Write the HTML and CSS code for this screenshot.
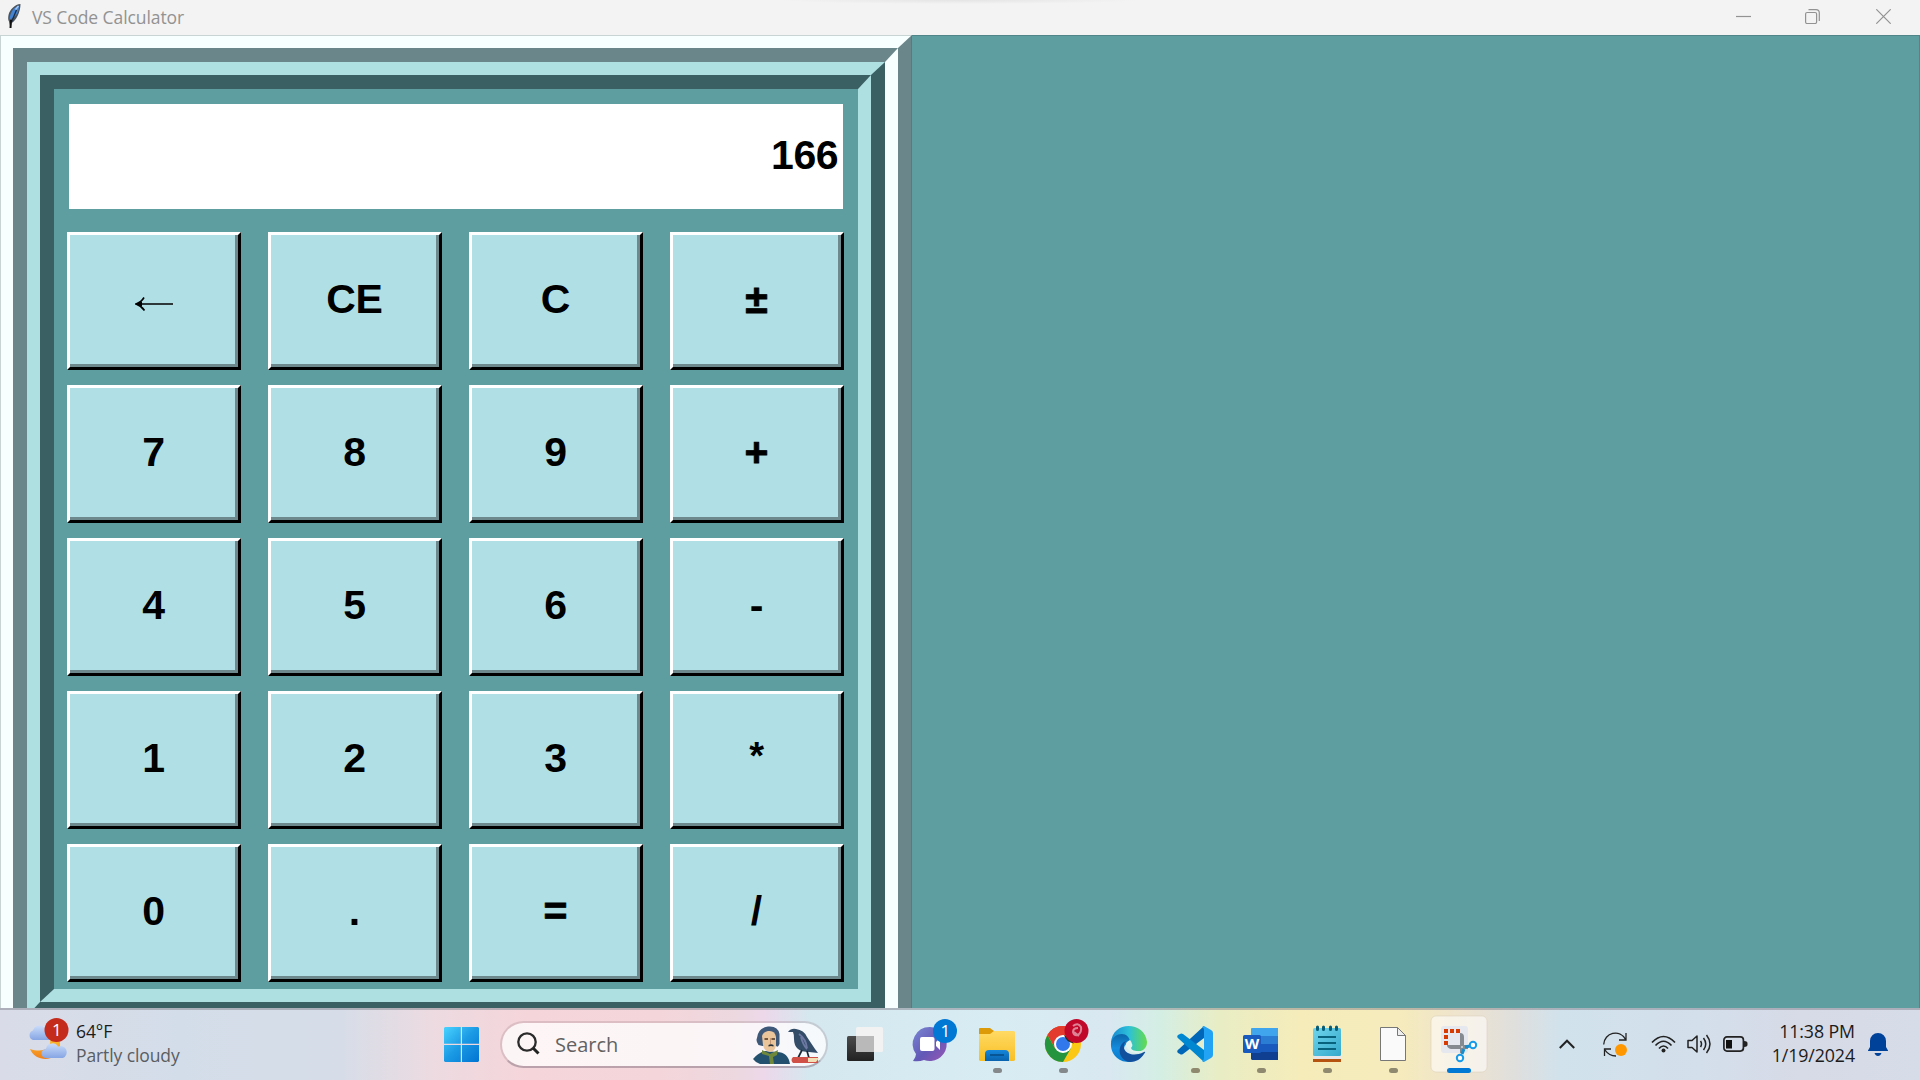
FILE: index.html
```html
<!DOCTYPE html>
<html lang="en">
<head>
<meta charset="utf-8">
<title>VS Code Calculator</title>
<link rel="stylesheet" href="styles.css">
</head>
<body>
<header class="titlebar">
  <svg class="feather" width="16" height="26" viewBox="0 0 16 26"><path d="M14.500 1C9 1 3.500 7 2.500 12c-.5 3-.5 5 .5 6.500L4.500 25l1-5C10 18 14.500 9 14.500 1z" fill="#4b535c"/><path d="M13 2.500C8 4 4 9 3.500 16.500 9 15 13.500 9 13 2.500z" fill="#4584d2"/><path d="M10.500 7 5.500 19" stroke="#1c2c44" stroke-width="1.300"/><path d="m5 17-.5 8" stroke="#111" stroke-width="2"/><path d="m12.500 3-3 3.500" stroke="#a8c8ee" stroke-width="1.500"/></svg>
  <span class="title">VS Code Calculator</span>
  <div class="controls">
    <svg width="15" height="15" viewBox="0 0 15 15"><path d="M0 7.500h15"/></svg>
    <svg width="15" height="15" viewBox="0 0 15 15"><rect x=".6" y="3.500" width="11" height="11" rx="1.500"/><path d="M3.500.700H11Q14.300.700 14.300 4v8"/></svg>
    <svg class="close" width="15" height="15" viewBox="0 0 15 15"><path d="m.3.300 14.400 14.400M14.700.300.300 14.700"/></svg>
  </div>
</header>
<main class="window">
  <div class="ring ring-1"><div class="ring ring-2"><div class="ring ring-3"><div class="ring ring-4">
    <output class="display">166</output>
    <div class="keys">
      <button class="key"><svg width="38" height="14" viewBox="0 0 38 14"><path d="M2 7h36M9 .500Q6.500 5 1 7q5.500 2 8.500 6.500" fill="none" stroke="#000" stroke-width="1.600"/><path d="M0 7 7 4.500v5z"/></svg></button><button class="key">CE</button><button class="key">C</button><button class="key op">±</button>
      <button class="key">7</button><button class="key">8</button><button class="key">9</button><button class="key op">+</button>
      <button class="key">4</button><button class="key">5</button><button class="key">6</button><button class="key">-</button>
      <button class="key">1</button><button class="key">2</button><button class="key">3</button><button class="key star">*</button>
      <button class="key">0</button><button class="key">.</button><button class="key op">=</button><button class="key">/</button>
    </div>
  </div></div></div></div>
</main>
<footer class="taskbar">
  <div class="weather">
    <svg width="44" height="46" viewBox="0 0 44 46">
      <defs><linearGradient id="cloud" x2="0" y2="1"><stop stop-color="#c9dcfa"/><stop offset="1" stop-color="#86a5e4"/></linearGradient><linearGradient id="moon" x2="0" y2="1"><stop stop-color="#fdbd2c"/><stop offset="1" stop-color="#f0801c"/></linearGradient></defs>
      <path d="M6 22a5 5 0 0 1 0-9.500 6.500 6.500 0 0 1 12-1.500q6 1 5 11z" fill="url(#cloud)"/>
      <path d="M33 21v9c-4 15-25 14-30 1 12 4 22 0 20-10z" fill="url(#moon)"/>
      <path d="M19 40a4.500 4.500 0 0 1 0-9 6.500 6.500 0 0 1 12-2.500 6 6 0 0 1 5 11.500z" fill="url(#cloud)"/>
      <circle cx="29.500" cy="12" r="12" fill="#c42b1c"/><text x="29.800" y="18" class="badge">1</text>
    </svg>
    <div class="forecast"><span class="temp">64°F</span><span class="sky">Partly cloudy</span></div>
  </div>
  <svg class="start" width="35" height="35" viewBox="0 0 35 35"><defs><linearGradient id="win" x2="1" y2="1"><stop stop-color="#4ad3ff"/><stop offset=".5" stop-color="#1a99e4"/><stop offset="1" stop-color="#0074d2"/></linearGradient></defs><path d="M1 0h15.800v16.800H0V1zM18 0h16l1 1v15.800H18zM0 18h16.800v17H1l-1-1zM18 18h17v16l-1 1H18z" fill="url(#win)"/></svg>
  <div class="search">
    <svg width="23" height="24" viewBox="0 0 23 24"><circle cx="10" cy="10" r="8.700" fill="none" stroke="#2b2b2b" stroke-width="2.300"/><path d="m16 16 5.500 5.500" stroke="#222" stroke-width="3"/></svg>
    <span class="placeholder">Search</span>
    <svg class="art" width="68" height="38" viewBox="0 0 68 38">
      <path d="M0 33q5-6 12-8l12 1q11 0 13 12H7q-4-1-7-5z" fill="#24506f"/>
      <path d="M4 12Q5 2 15 .500q10-1 11.500 7.500v10q-2 5-4 1l-13 1-4-1q-3-4-1.500-7z" fill="#3d5878"/>
      <path d="M9 10q1-4 6-5 7-1 8 6v8q-1 7-6 7-6-1-7-7z" fill="#eac49b"/>
      <path d="M11.500 13h3.500m3.500 0H22" stroke="#4c3425" stroke-width="1.400"/><path d="M17.500 12v6" stroke="#c59773"/><path d="M15.500 19q2.500-1.500 5 0v1.500q-2.500-1-5 0z" fill="#263039"/>
      <path d="m9 24 8 4 8-4-1 5-4 2 1 7h-4l-1-8-7-2z" fill="#6f873b"/>
      <path d="M35 6q3-4 8-3 8 1 11 8 4 6 8 12l3 4-9-1q-15 0-15-13 0-5-1-7z" fill="#334d69"/><path d="M46 8q7 5 8 14m-6-11q2 8 6 12" fill="none" stroke="#6d79a3" stroke-width="1.800"/>
      <path d="m49 24-4 8m9-7 2 7M43 32h6m5 0h5" stroke="#1b2838" stroke-width="1.700"/>
      <path d="M40 31h25v6H40q-3-3 0-6z" fill="#cf5147"/><path d="M55 32h11l-3 4h-8z" fill="#f2dfb6"/>
    </svg>
  </div>
  <nav class="apps">
    <svg class="app" viewBox="0 0 66 72"><defs><linearGradient id="tv" x2="0" y2="1"><stop stop-color="#4b4b4b"/><stop offset="1" stop-color="#222"/></linearGradient></defs><rect x="15" y="28" width="27" height="25" rx="1.500" fill="url(#tv)"/><rect x="24" y="19" width="27" height="25" rx="1.500" fill="#f2f2f3"/><path d="M24 28h18v16H24z" fill="#b9b9b9"/></svg>
    <svg class="app" viewBox="0 0 66 72"><defs><linearGradient id="chat" x2="1" y2="1"><stop stop-color="#7b87d4"/><stop offset=".55" stop-color="#6259b6"/><stop offset="1" stop-color="#9b57b5"/></linearGradient></defs><path d="M32 19a17 17 0 1 1-6 33q-5 2-11 1 3-4 3-7A17 17 0 0 1 32 19z" fill="url(#chat)"/><rect x="22" y="29" width="14.500" height="14" rx="2" fill="#fff"/><path d="m38 34 4-4v12l-4-4z" fill="#fff"/><circle cx="47" cy="23" r="12" fill="#0078d4"/><text x="47.300" y="29" class="badge">1</text></svg>
    <svg class="app" viewBox="0 0 66 72"><defs><linearGradient id="fold" x2="0" y2="1"><stop stop-color="#ffda64"/><stop offset="1" stop-color="#f9bf25"/></linearGradient><linearGradient id="slot" x2="0" y2="1"><stop stop-color="#1687dc"/><stop offset="1" stop-color="#0863ae"/></linearGradient></defs><path d="M15 21q0-1 1-1h10l4 3v4H15z" fill="#dc9a09"/><path d="M15 26h11l4-3h20l1 1v28l-1 1H16l-1-1z" fill="url(#fold)"/><path d="M21 53v-7q0-4 4-4h16q4 0 4 4v7z" fill="url(#slot)"/><path d="M26 47h14" stroke="#064d88" stroke-width="1.600"/><rect x="29" y="60" width="9" height="5" rx="2.500" class="dot"/></svg>
    <svg class="app" viewBox="0 0 66 72"><circle cx="33" cy="36" r="18" fill="#fbc816"/><path d="M33 36 17.400 27A18 18 0 0 1 48.600 27z" fill="#e33b2e"/><path d="M33 27h15.600A18 18 0 0 0 17.400 27L25.200 40.500z" fill="#e33b2e"/><path d="M17.400 27A18 18 0 0 0 33 54l7.800-13.500L25.200 40.500z" fill="#24943f"/><circle cx="33" cy="36" r="9" fill="#fff"/><circle cx="33" cy="36" r="7" fill="#3078ec"/><path d="M34 27a12 12 0 0 0 10 8.500L40 30z" fill="#18351d"/><circle cx="46.500" cy="23" r="12" fill="#c1082b"/><path d="M43 18q5-4 8 1 1 5-3 8-4 1-5-3 0-4 5-4m-4 4 5 4" fill="none" stroke="#dd8294" stroke-width="2"/><rect x="29" y="60" width="9" height="5" rx="2.500" class="dot"/></svg>
    <svg class="app" viewBox="0 0 66 72"><defs><linearGradient id="edgeTop"><stop stop-color="#1689d3"/><stop offset=".5" stop-color="#2dc1d8"/><stop offset="1" stop-color="#65db4c"/></linearGradient><linearGradient id="edgeLow" x2="0" y2="1"><stop stop-color="#0b66a9"/><stop offset=".5" stop-color="#148bdc"/><stop offset="1" stop-color="#087bd0"/></linearGradient></defs><path d="M15 35C16 12 49 13 51 34c0 8-7 11-15 9-5-1-3-3-2-5 2-9-12-12-19-3z" fill="url(#edgeTop)"/><path d="M15 35c2-11 19-13 19 0-9 0-8 15 4 18-12 4-24-5-23-18z" fill="url(#edgeLow)"/><path d="M30 33c-7 9 4 18 18 11 2-1 1 1 0 2-3 5-8 8-14 8C21 52 21 36 30 33z" fill="#11509c"/><path d="M34 32q-5 2-4 6 2 6 10 7 5 0 9-2-13 1-14-3 3-3-1-8z" fill="#e2f2ef"/></svg>
    <svg class="app" viewBox="0 0 66 72"><path d="m42 18-25 23q-3 2-1 4l2 1q1 1 3 0l21-16z" fill="#0066b8"/><path d="m42 54-25-23q-3-2-1-4l2-1q1-1 3 0l21 16z" fill="#0087d2"/><path d="m42 18 7 4q2 1 2 3v22q0 2-2 3l-7 4q-1 0-2-1 2-1 2-3V22q0-2-2-3z" fill="#22a3f4"/><rect x="29" y="60" width="9" height="5" rx="2.500" class="dot warm"/></svg>
    <svg class="app" viewBox="0 0 66 72"><path d="M23 21q0-1 1-1h26v8H23z" fill="#41a5ee"/><path d="M23 28h27v8H23z" fill="#2b7cd3"/><path d="M23 36h27v8H23z" fill="#185abd"/><path d="M23 44h27v8H24l-1-1z" fill="#103f91"/><rect x="15" y="27" width="18" height="18" rx="1.500" fill="#185abd"/><text x="24" y="41" class="word">W</text><rect x="29" y="60" width="9" height="5" rx="2.500" class="dot warm"/></svg>
    <svg class="app" viewBox="0 0 66 72"><defs><linearGradient id="note" x2="1" y2="1"><stop stop-color="#6fd4ec"/><stop offset="1" stop-color="#35a9cc"/></linearGradient></defs><path d="M19 47h28v6H19z" fill="#e8e6e9"/><path d="M19 51h28v3H19z" fill="#b65310"/><rect x="19" y="20" width="28" height="28" rx="1.500" fill="url(#note)"/><path d="M23.500 19v2.500m6-2.500v2.500m7-2.500v2.500m6-2.500v2.500" stroke="#075b75" stroke-width="3" stroke-linecap="round"/><path d="M24 29h18m-18 6h18m-18 6h18" stroke="#08627e" stroke-width="2"/><rect x="29" y="60" width="9" height="5" rx="2.500" class="dot warm"/></svg>
    <svg class="app" viewBox="0 0 66 72"><path d="M20.500 19.500h17l8 8v25h-25z" fill="#fafafa" stroke="#777" stroke-width="1"/><path d="M37.500 19.500v8h8z" fill="#eee" stroke="#777"/><rect x="29" y="60" width="9" height="5" rx="2.500" class="dot warm"/></svg>
    <svg class="app" viewBox="0 0 66 72"><rect x="5" y="8" width="56" height="56" rx="5" fill="#fff" fill-opacity=".55" stroke="#d9cdb8" stroke-opacity=".5"/><rect x="15" y="18" width="27" height="27" rx="3" fill="#e5e8ee"/><path d="M18 21h4v4h-4zm6 0h4v4h-4zm6 0h4v4h-4zM18 27h4v4h-4zm0 6h4v4h-4z" fill="#d83b01"/><path d="M34 25q4 0 4 4v16h-4zM21 37h21v4H25q-4-1-4-4z" fill="#858990"/><path d="m38 41-2 5M39 39l5-1" stroke="#168dcc" stroke-width="3"/><circle cx="34" cy="50" r="3.200" class="loop"/><circle cx="47" cy="37" r="3.200" class="loop"/><circle cx="36" cy="39" r="1" fill="#d7d7d7"/><rect x="21" y="60" width="24" height="5" rx="2.500" fill="#0078d4"/></svg>
  </nav>
  <div class="tray">
    <svg width="16" height="10" viewBox="0 0 16 10"><path d="m.800 9 7.200-7.300L15.200 9" fill="none" stroke="#222" stroke-width="2"/></svg>
    <svg class="sync" width="25" height="25" viewBox="0 0 25 25"><path d="M.700 12.500C1 1 17-4 23 8m0-7v7h-7M8 17H1.500v7M2 18q4 6 11 6" fill="none" stroke="#222" stroke-width="1.300"/><circle cx="18" cy="18" r="6" fill="#ff9800"/></svg>
    <svg class="wifi" width="25" height="18" viewBox="0 0 25 18"><path d="M1 7.500q11.500-12 23 0M4.500 10.500q8-8.500 16 0M8 13.500q4.500-5 9 0" fill="none" stroke="#222" stroke-width="1.700"/><circle cx="12.500" cy="15.500" r="2" fill="#222"/></svg>
    <svg class="sound" width="25" height="20" viewBox="0 0 25 20"><path d="M1 6.500h4L10 2v16l-5-4.500H1zM13.500 7q2 3 0 6M16.500 4q4.500 6 0 12M19.500 1q7 9 0 18" fill="none" stroke="#222" stroke-width="1.500" stroke-linejoin="round"/></svg>
    <svg class="battery" width="25" height="16" viewBox="0 0 25 16"><rect x=".9" y=".9" width="19.500" height="14.200" rx="3" fill="none" stroke="#222" stroke-width="1.700"/><rect x="3" y="4" width="6" height="8.500" fill="#111"/><path d="M21 5q4 0 3.500 3 .5 3-3.500 3z" fill="#222"/></svg>
    <div class="clock"><span>11:38 PM</span><span>1/19/2024</span></div>
    <svg class="bell" width="20" height="23" viewBox="0 0 20 23"><path d="M2 14V8a8 8 0 0 1 16 0v6l2 3.500v.500H0v-.500zM6.500 20h7q-1 3-3.500 3t-3.500-3z" fill="#00419a"/></svg>
  </div>
</footer>
</body>
</html>
```
FILE: styles.css
```css
* { box-sizing: border-box; }

body {
  margin: 0;
  width: 1920px;
  height: 1080px;
  overflow: hidden;
  display: flex;
  flex-direction: column;
  font-family: "Open Sans", "Noto Sans", sans-serif;
  background: #5f9ea0;
}

svg { display: block; flex: none; }

.titlebar {
  height: 35px;
  flex: none;
  display: flex;
  align-items: center;
  padding: 0 12px 0 6px;
  background: radial-gradient(ellipse 180px 4px at 960px 0, #e4e4e4, #f3f3f3);
  color: #929292;
}
.feather { margin-top: -3px; }
.title { font-size: 17.5px; letter-spacing: -0.08px; margin-left: 10px; line-height: 35px; }
.controls { margin-left: auto; display: flex; gap: 54px; padding: 0 17px 2px 0; }
.controls svg { fill: none; stroke: #929292; stroke-width: 1.2; }
.controls .close { margin-left: 2px; }

.window {
  height: 973px;
  flex: none;
  overflow: hidden;
  background: #5f9ea0;
  box-shadow: inset 0 1px #508589, inset -1px 0 #508589;
}

/* Raised and sunken frames nested inside each other */
.ring { border-style: solid; }
.ring-1 { width: 912px; height: 1008px; border-width: 13px 14px 14px 13px; border-color: #f7ffff #6b868a #6b868a #f7ffff; }
.ring-2 { height: 981px; border-width: 14px 13px 13px 14px; border-color: #6b868a #f7ffff #f7ffff #6b868a; }
.ring-3 { height: 954px; border-width: 13px 14px 14px 13px; border-color: #aedfe1 #3a6063 #3a6063 #aedfe1; }
.ring-4 { height: 927px; border-width: 14px 13px 13px 14px; border-color: #3a6063 #aedfe1 #aedfe1 #3a6063; padding: 15px 14px 7px 13px; }
.ring-1 { outline: 1px solid rgba(60, 80, 80, 0.25); outline-offset: -1px; }

.display {
  display: block;
  width: 774px;
  height: 105px;
  margin-left: 2px;
  padding-right: 5px;
  background: #fff;
  text-align: right;
  font: bold 41px/102px "Liberation Sans", Arial, sans-serif;
  letter-spacing: -0.5px;
}

.keys {
  display: grid;
  grid-template-columns: repeat(4, 174px);
  grid-auto-rows: 138px;
  gap: 15px 27px;
  margin: 22.5px 0 0 0.4px;
}
.key {
  display: flex;
  align-items: center;
  justify-content: center;
  padding: 0 2px 2px 0;
  border: 3px solid;
  border-color: #fff #000 #000 #fff;
  background: #b0e0e6;
  box-shadow: inset -3px -3px #6d898d;
  color: #000;
  font: bold 41px "Liberation Sans", Arial, sans-serif;
  letter-spacing: -0.3px;
}
.key svg { margin: 8px 0 0 2px; }
.op { -webkit-text-stroke: 0.8px #000; }
.star { font-size: 38px; padding-bottom: 6px; }

.taskbar {
  height: 72px;
  flex: none;
  display: flex;
  align-items: center;
  padding-bottom: 2px;
  border-top: 2px solid rgba(130, 130, 140, 0.5);
  background: linear-gradient(90deg, #d9dce8 0, #d3dde9 180px, #d6dde8 340px, #ecdbe1 430px, #f5d5da 530px, #f4d6da 660px, #ecd8e0 740px, #ecd8ea 765px, #d5e8ef 810px, #d8ecf3 1000px, #d9e8f1 1110px, #d4eee4 1160px, #e9edc4 1220px, #f5ecba 1300px, #f5ebbc 1400px, #eee3cf 1465px, #dfdfdd 1515px, #d1e2ec 1560px, #d3dfeb 1700px, #d7dae7 1800px, #d6dce8 1920px);
}

.weather { width: 444px; display: flex; align-items: center; padding-left: 28px; margin-top: -4px; }
.weather svg { margin: -2px 1px 0 -1px; }
.forecast { display: flex; flex-direction: column; margin: 1px 0 0 4px; font-size: 17.5px; line-height: 24px; letter-spacing: -0.1px; }
.temp { color: #1b1b1b; }
.sky { color: #5a5d62; }
.badge { font-size: 17px; fill: #fff; text-anchor: middle; }

.search {
  width: 328px;
  height: 47px;
  margin-left: 21px;
  padding: 0 5px 0 15px;
  display: flex;
  align-items: center;
  border: 2px solid rgba(150, 120, 130, 0.25);
  border-bottom-color: rgba(130, 110, 125, 0.5);
  border-radius: 24px;
  background: rgba(255, 255, 255, 0.75);
  background-clip: padding-box;
}
.placeholder { margin-left: 15px; font-size: 20px; color: #626262; }
.art { margin: 2px 0 0 auto; }

.apps { display: flex; margin-left: 4px; }
.app { width: 66px; height: 72px; }
.dot { fill: #85888a; }
.warm { fill: #8f8a6f; }
.word { font: bold 15px "Open Sans", sans-serif; fill: #fff; text-anchor: middle; }
.loop { fill: #fff; stroke: #169bea; stroke-width: 2; }

.tray { display: flex; align-items: center; margin-left: 67px; }
.sync { margin-left: 28px; }
.wifi { margin-left: 23px; }
.sound { margin-left: 11px; }
.battery { margin-left: 11px; }
.clock { width: 107px; display: flex; flex-direction: column; align-items: flex-end; margin-top: -2px; font-size: 17.8px; line-height: 24px; letter-spacing: -0.1px; color: #1b1b1b; }
.bell { margin-left: 13px; }
```
